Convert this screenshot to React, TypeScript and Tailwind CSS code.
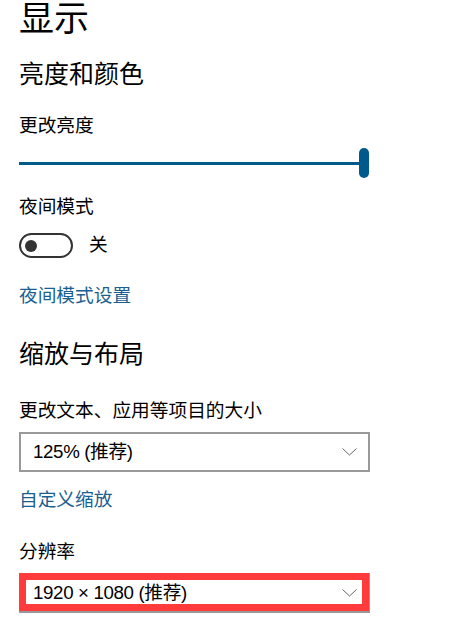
function Chevron() {
  return (
    <svg width="15" height="8" viewBox="0 0 15 8" fill="none" className="shrink-0">
      <path d="M0.5 0.5L7.5 7L14.5 0.5" stroke="#666" strokeWidth="1" />
    </svg>
  );
}

function Dropdown({ value }: { value: string }) {
  return (
    <div className="flex h-10 w-[351px] items-center justify-between border-[2.5px] border-[#999] bg-white pl-[12px] pr-[11px]">
      <span className="text-[18.7px] leading-none tracking-[-0.35px] text-black">{value}</span>
      <Chevron />
    </div>
  );
}

export default function App() {
  return (
    <div
      className="flex h-[625px] w-[459px] flex-col overflow-hidden bg-white pl-[19px] text-black"
      style={{ fontFamily: '"Liberation Sans", "Noto Sans CJK SC", sans-serif' }}
    >
      <h1 className="mt-[1px] text-[35px] leading-[35px] font-normal">显示</h1>
      <h2 className="mt-[26px] text-[25px] leading-[25px] font-normal">亮度和颜色</h2>
      <div className="mt-[29px] text-[18.7px] leading-[19px]">更改亮度</div>

      {/* brightness slider */}
      <div className="mt-[13px] flex h-[30px] w-[350px] items-center">
        <div className="h-[3px] flex-1 bg-[#005a8a]" />
        <div className="h-[30px] w-[10px] rounded-full bg-[#005a8a]" />
      </div>

      <div className="mt-[19px] text-[18.7px] leading-[19px]">夜间模式</div>
      <div className="mt-[17px] flex items-center gap-[16px]">
        <div className="flex h-[25px] w-[54px] items-center rounded-full border-[2.5px] border-[#333] pl-[4px]">
          <div className="h-[12px] w-[12px] rounded-full bg-[#333]" />
        </div>
        <span className="text-[18.7px] leading-none">关</span>
      </div>

      <div className="mt-[28px] text-[18.7px] leading-[19px] text-[#1a5f91]">夜间模式设置</div>

      <h2 className="mt-[37px] text-[25px] leading-[25px] font-normal">缩放与布局</h2>
      <div className="mt-[34px] text-[18.7px] leading-[19px]">更改文本、应用等项目的大小</div>
      <div className="mt-[12px]">
        <Dropdown value="125% (推荐)" />
      </div>
      <div className="mt-[18px] text-[18.7px] leading-[19px] text-[#1a5f91]">自定义缩放</div>

      <div className="mt-[33px] text-[18.7px] leading-[19px]">分辨率</div>
      <div className="relative mt-[12px] w-[351px]">
        <Dropdown value="1920 × 1080 (推荐)" />
        <div className="pointer-events-none absolute top-0 right-[1px] bottom-[2px] left-0 border-[7px] border-[#ff3b3b]" />
      </div>
    </div>
  );
}
